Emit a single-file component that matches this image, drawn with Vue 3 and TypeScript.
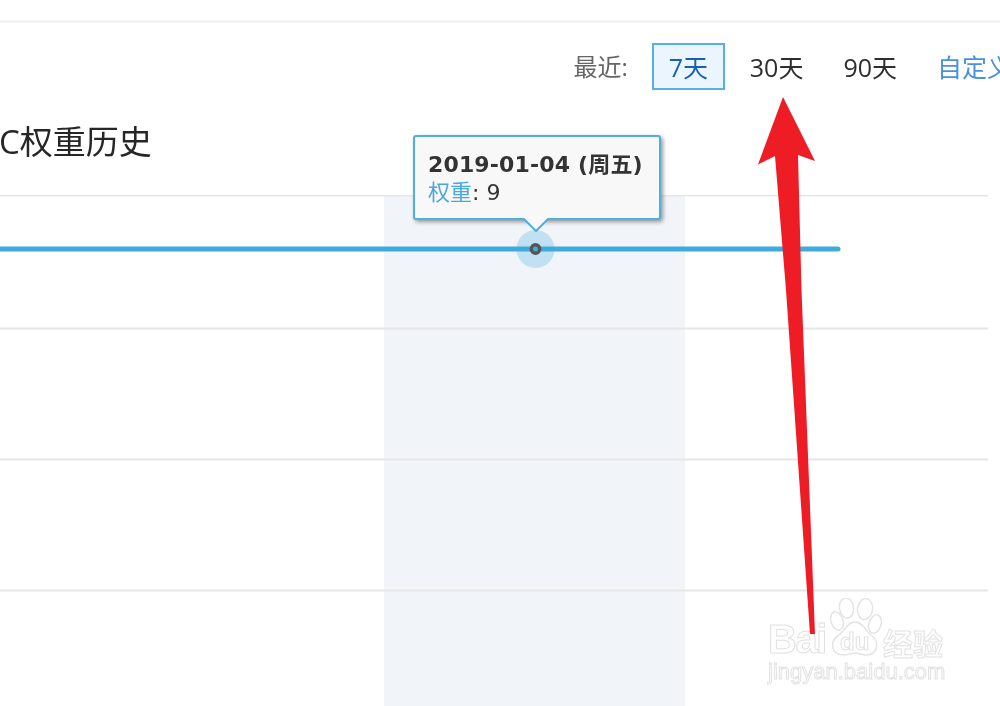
<script setup lang="ts">
const gridLines: number[] = [0.5, 133.5, 264.5, 395.5]
const ranges: { label: string; kind: string }[] = [
  { label: '7天', kind: 'active' },
  { label: '30天', kind: '' },
  { label: '90天', kind: '' },
  { label: '自定义', kind: 'link' },
]
</script>

<template>
  <div class="page">
    <div class="topbar"></div>
    <div class="toolbar">
      <span class="recent">最近:</span>
      <span v-for="r in ranges" :key="r.label" class="range" :class="r.kind"><span class="range-text">{{ r.label }}</span></span>
    </div>
    <h2 class="title">C权重历史</h2>

    <div class="chart">
      <svg class="plot" width="1000" height="511" viewBox="0 0 1000 511">
        <rect x="384" y="0" width="301" height="511" fill="#f1f5fa" />
        <line v-for="y in gridLines" :key="y" x1="0" x2="988" :y1="y" :y2="y" stroke="#e6e6e6" stroke-width="2" />
        <line x1="-5" x2="838" y1="54" y2="54" stroke="#3eabdc" stroke-width="5" stroke-linecap="round" />
        <circle cx="535.5" cy="54" r="19" fill="#3eabdc" fill-opacity="0.27" />
        <circle cx="535.5" cy="54" r="4.2" fill="#3eabdc" stroke="#555" stroke-width="3.4" />
      </svg>

      <div class="tooltip">
        <div class="tip-date">2019-01-04 (周五)</div>
        <div class="tip-value"><span class="tip-key">权重</span>: 9</div>
        <svg class="tip-arrow" width="28" height="15" viewBox="0 0 28 15">
          <path d="M1 0 L14 13 L27 0" fill="#f8f8f9" stroke="#4fb0dc" stroke-width="2" />
        </svg>
      </div>
    </div>

    <div class="watermark">
      <span class="wm-bai">Bai</span>
      <svg class="paw" width="54" height="60" viewBox="0 0 54 60" fill="#fff" stroke="#e4e4e4" stroke-width="1.5">
        <ellipse cx="9" cy="23" rx="6" ry="9.5" transform="rotate(-18 9 23)" />
        <ellipse cx="18.5" cy="10" rx="7" ry="10" transform="rotate(-8 18.5 10)" />
        <ellipse cx="37" cy="11" rx="7.5" ry="10.5" transform="rotate(8 37 11)" />
        <ellipse cx="47" cy="26" rx="6" ry="9.5" transform="rotate(18 47 26)" />
        <path d="M27 24 C35 24 37 33 43 37 C52 43 50 57 38 57 C33 57 31 55 27 55 C23 55 20 57 15 57 C3 57 1 43 11 37 C17 33 19 24 27 24 Z" />
      </svg>
      <span class="wm-du">du</span>
      <span class="wm-cn">经验</span>
      <span class="wm-url">jingyan.baidu.com</span>
    </div>

    <svg class="red-arrow" width="1000" height="706" viewBox="0 0 1000 706">
      <path d="M783 97 L815 161 L798 155 L801.5 290 L815 634 L810 634 L786 290 L775 156 L758 164.5 Z" fill="#ee1c25" />
    </svg>
  </div>
</template>

<style scoped>
.page {
  position: relative;
  width: 1000px;
  height: 706px;
  overflow: hidden;
  background: #fff;
  font-family: "Open Sans", "Noto Sans CJK SC", sans-serif;
  filter: blur(0.35px);
}
.topbar {
  height: 20px;
  border-bottom: 3px solid #f3f3f3;
}
.toolbar {
  display: flex;
  align-items: center;
  justify-content: flex-end;
  height: 47px;
  margin-top: 20px;
  margin-right: -12px;
  font-size: 25px;
  color: #2e2e2e;
}
.recent {
  color: #666;
  font-size: 24px;
  margin-right: 24px;
  position: relative;
  top: -1px;
}
.range {
  margin-right: 40px;
  white-space: nowrap;
}
.range-text {
  position: relative;
  top: -1px;
}
.range.active {
  box-sizing: border-box;
  width: 73px;
  height: 47px;
  margin-right: 25px;
  border: 2px solid #5aaee8;
  background: #eaf5fd;
  color: #1a5fb4;
  display: flex;
  align-items: center;
  justify-content: center;
}
.range.link {
  color: #4a90e2;
  margin-right: 0;
}
.title {
  margin: 28px 0 0 -1px;
  height: 48px;
  font-size: 33px;
  line-height: 48px;
  font-weight: 400;
  color: #262626;
  white-space: nowrap;
}
.chart {
  position: relative;
  margin-top: 29px;
  height: 511px;
}
.plot {
  display: block;
}
.tooltip {
  position: absolute;
  left: 413px;
  top: -60px;
  box-sizing: border-box;
  width: 248px;
  height: 85px;
  padding: 14px 13px;
  border: 2px solid #4fb0dc;
  border-radius: 3px;
  background: #f8f8f9;
  box-shadow: 2px 2px 4px rgba(0, 0, 0, 0.4);
  font-family: "DejaVu Sans", "Noto Sans CJK SC", sans-serif;
  font-size: 22px;
  line-height: 28px;
  color: #333;
}
.tip-date {
  font-weight: 700;
  white-space: nowrap;
  letter-spacing: 0.15px;
}
.tip-key {
  color: #4aa8dc;
}
.tip-arrow {
  position: absolute;
  left: 107px;
  top: 81px;
}
.watermark {
  position: absolute;
  left: 768px;
  top: 598px;
  width: 180px;
  height: 90px;
  color: #fff;
}
.watermark span {
  position: absolute;
  -webkit-text-stroke: 1px #e2e2e2;
  white-space: nowrap;
}
.paw {
  position: absolute;
  left: 60px;
  top: 0;
}
.wm-bai {
  left: 0;
  top: 19px;
  font: 700 40px/44px "Liberation Sans", sans-serif;
  letter-spacing: -1.5px;
}
.wm-du {
  left: 72px;
  top: 31px;
  font: 700 24px/26px "Liberation Sans", sans-serif;
}
.wm-cn {
  left: 115px;
  top: 27px;
  font: 700 30px/34px "Noto Sans CJK SC", sans-serif;
}
.wm-url {
  left: 0;
  top: 61px;
  font: 400 22px/26px "Liberation Sans", sans-serif;
}
.red-arrow {
  position: absolute;
  left: 0;
  top: 0;
  pointer-events: none;
}
</style>

<style>
html, body {
  margin: 0;
  overflow: hidden;
}
</style>
